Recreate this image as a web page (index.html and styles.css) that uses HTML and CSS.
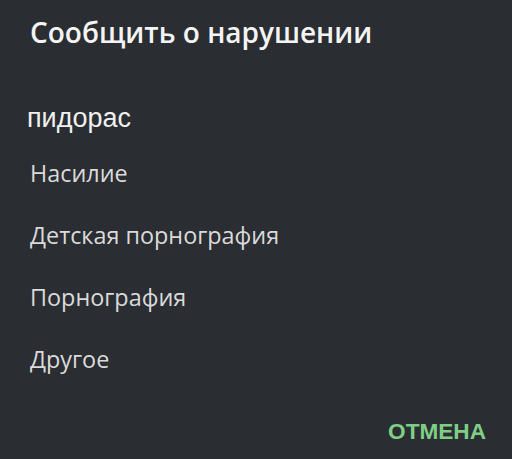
FILE: index.html
```html
<!DOCTYPE html>
<html lang="ru">
<head>
<meta charset="utf-8">
<link rel="stylesheet" href="styles.css">
</head>
<body>
<div class="dialog">
  <h1 class="title">Сообщить о нарушении</h1>
  <div class="custom">пидорас</div>
  <ul class="options">
    <li>Насилие</li>
    <li>Детская порнография</li>
    <li>Порнография</li>
    <li>Другое</li>
  </ul>
  <div class="actions"><span class="cancel">ОТМЕНА</span></div>
</div>
</body>
</html>
```
FILE: styles.css
```css
html, body {
  margin: 0;
  padding: 0;
  background: #2a2d32;
}
.dialog {
  width: 512px;
  height: 459px;
  box-sizing: border-box;
  padding: 14px 26px 0 30px;
  background: #2a2d32;
  display: flex;
  flex-direction: column;
}
.title {
  margin: 0;
  font-family: "Open Sans", sans-serif;
  font-weight: 600;
  font-size: 28px;
  line-height: 36px;
  color: #f4f4f4;
  white-space: nowrap;
}
.custom {
  margin: 53px 0 0 -3px;
  font-family: "Liberation Sans", Arial, sans-serif;
  font-size: 27px;
  line-height: 30px;
  color: #f0f0f0;
}
.options {
  list-style: none;
  margin: 24px 0 0;
  padding: 0;
  display: flex;
  flex-direction: column;
  gap: 30px;
}
.options li {
  font-family: "Open Sans", sans-serif;
  font-size: 23.4px;
  line-height: 32px;
  color: #dadada;
}
.actions {
  margin-top: auto;
  padding-bottom: 14px;
  display: flex;
  justify-content: flex-end;
}
.cancel {
  font-family: "Liberation Sans", Arial, sans-serif;
  font-weight: 700;
  font-size: 22.6px;
  line-height: 26px;
  color: #80ce86;
}
```
